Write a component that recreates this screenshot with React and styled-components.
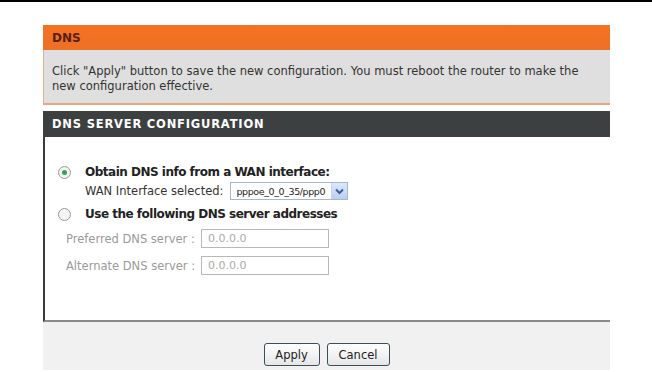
import React from 'react';
import styled, { createGlobalStyle } from 'styled-components';

const Global = createGlobalStyle`
  body {
    margin: 0;
    background: #fff;
    font-family: "DejaVu Sans", Tahoma, sans-serif;
    font-size: 11.5px;
    color: #333;
  }
`;

const TopRule = styled.div`
  height: 2px;
  background: #000;
`;

const Panel = styled.div`
  width: 567px;
  margin: 23px 0 0 43px;
`;

const Header = styled.div`
  height: 25px;
  line-height: 26px;
  padding-left: 9px;
  background: linear-gradient(#f67222, #ec7026);
  color: #5a1c0c;
  font-weight: bold;
  font-size: 12px;
`;

const Info = styled.div`
  height: 55px;
  box-sizing: border-box;
  padding: 14px 8px 0;
  background: #dfdfdf;
  border-left: 1px solid #e7b089;
  border-bottom: 2px solid #e8a77a;
  line-height: 15px;
`;

const Section = styled.div`
  margin-top: 6px;
  height: 26px;
  line-height: 27px;
  padding-left: 9px;
  background: #3d4040;
  color: #fff;
  font-weight: bold;
  font-size: 11.5px;
  letter-spacing: 0.8px;
`;

const Body = styled.div`
  height: 185px;
  box-sizing: border-box;
  padding: 26px 0 0 13px;
  background: #fff;
  border-left: 2px solid #3a3a3a;
  border-bottom: 2px solid #8a8a8a;
`;

const Option = styled.div`
  display: flex;
  align-items: center;
  height: 18px;
  margin-top: ${p => p.$gap || 0}px;
  font-weight: bold;
  font-size: 12px;
  letter-spacing: -0.5px;
  color: #222;
`;

const Radio = styled.span`
  width: 11px;
  height: 11px;
  border-radius: 50%;
  border: 1px solid #9a9a9a;
  background: #f4f4f4;
  margin-right: 14px;
  display: flex;
  align-items: center;
  justify-content: center;
  &::after {
    content: '';
    width: 5px;
    height: 5px;
    border-radius: 50%;
    background: ${p => (p.$checked ? '#2ea44f' : 'transparent')};
  }
`;

const SubRow = styled.div`
  display: flex;
  align-items: center;
  margin: 1px 0 0 27px;
  height: 18px;
  color: #333;
`;

const Select = styled.div`
  display: flex;
  align-items: center;
  height: 18px;
  box-sizing: border-box;
  margin-left: 7px;
  border: 1px solid #a8b8c8;
  font-size: 9.5px;
  color: #222;
  letter-spacing: -0.4px;
`;

const SelectText = styled.span`
  padding: 0 6px 0 5px;
`;

const Arrow = styled.span`
  width: 15px;
  height: 16px;
  background: linear-gradient(#dce8fb, #b9cff3);
  border-left: 1px solid #c6d4ea;
  display: flex;
  align-items: center;
  justify-content: center;
`;

const Field = styled.div`
  display: flex;
  align-items: center;
  margin: ${p => p.$gap}px 0 0 8px;
  color: #9a9a9a;
`;

const FieldLabel = styled.span`
  width: 135px;
`;

const Input = styled.div`
  width: 128px;
  height: 19px;
  box-sizing: border-box;
  border: 1px solid #b8b8b8;
  padding-left: 6px;
  line-height: 17px;
  color: #aaa;
  font-size: 11px;
`;

const Footer = styled.div`
  height: 48px;
  box-sizing: border-box;
  padding-top: 21px;
  background: #f1f1f1;
  display: flex;
  justify-content: center;
  gap: 7px;
`;

const Button = styled.button`
  width: ${p => p.$w}px;
  height: 23px;
  border: 1px solid #3a4f5a;
  border-radius: 3px;
  background: linear-gradient(#ffffff, #e6e6e6);
  font-family: "DejaVu Sans", Tahoma, sans-serif;
  font-size: 11.5px;
  color: #222;
  padding: 0;
`;

export default function App() {
  return (
    <>
      <Global />
      <TopRule />
      <Panel>
        <Header>DNS</Header>
        <Info>
          Click "Apply" button to save the new configuration. You must reboot the router to make the
          <br />
          new configuration effective.
        </Info>
        <Section>DNS SERVER CONFIGURATION</Section>
        <Body>
          <Option>
            <Radio $checked />
            Obtain DNS info from a WAN interface:
          </Option>
          <SubRow>
            WAN Interface selected:
            <Select>
              <SelectText>pppoe_0_0_35/ppp0</SelectText>
              <Arrow>
                <svg width="9" height="7" viewBox="0 0 9 7">
                  <path d="M1 1.5 L4.5 5 L8 1.5" fill="none" stroke="#3b5d9c" strokeWidth="2" />
                </svg>
              </Arrow>
            </Select>
          </SubRow>
          <Option $gap={5}>
            <Radio />
            Use the following DNS server addresses
          </Option>
          <Field $gap={6}>
            <FieldLabel>Preferred DNS server :</FieldLabel>
            <Input>0.0.0.0</Input>
          </Field>
          <Field $gap={8}>
            <FieldLabel>Alternate DNS server :</FieldLabel>
            <Input>0.0.0.0</Input>
          </Field>
        </Body>
        <Footer>
          <Button $w={56}>Apply</Button>
          <Button $w={63}>Cancel</Button>
        </Footer>
      </Panel>
    </>
  );
}
